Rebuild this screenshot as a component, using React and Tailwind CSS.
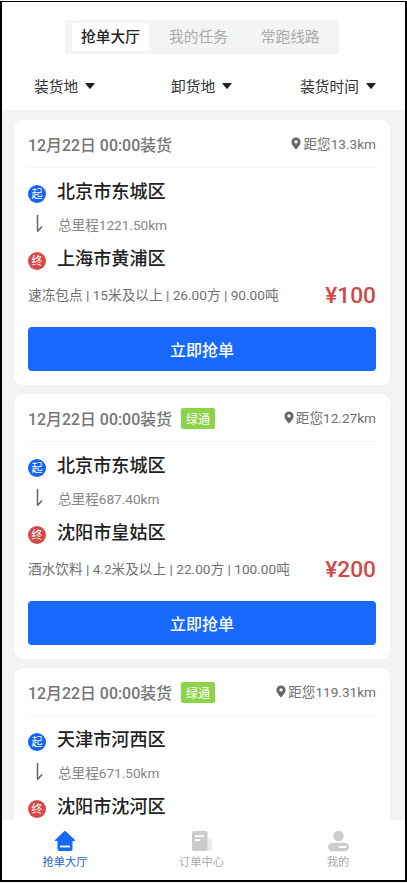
const FONT = "font-[Roboto,'Noto_Sans_CJK_SC',sans-serif]";

const orders = [
  { distance: '13.3km', from: '北京市东城区', to: '上海市黄浦区', mileage: '1221.50km', cargo: '速冻包点 | 15米及以上 | 26.00方 | 90.00吨', price: '¥100', green: false },
  { distance: '12.27km', from: '北京市东城区', to: '沈阳市皇姑区', mileage: '687.40km', cargo: '酒水饮料 | 4.2米及以上 | 22.00方 | 100.00吨', price: '¥200', green: true },
  { distance: '119.31km', from: '天津市河西区', to: '沈阳市沈河区', mileage: '671.50km', green: true },
];

function Filter({ label }) {
  return (
    <button className="flex items-center gap-[7px] text-[14.700px] leading-[22px] text-[#333]">
      {label}
      <svg width="10" height="6" viewBox="0 0 10 6" className="-mt-[3px]">
        <path d="M1 0H9Q10 0 9.500 .8L5.600 5.400Q5 6 4.400 5.400L.5.8Q0 0 1 0Z" fill="#222" />
      </svg>
    </button>
  );
}

function Pin() {
  return (
    <svg width="10" height="13" viewBox="0 0 10 13" className="-mt-px mr-[2px]">
      <path fillRule="evenodd" d="M5 .5A4.600 4.600 0 0 0 .4 5.100C.4 8 3.200 10.700 5 12.500 6.800 10.700 9.600 8 9.600 5.100A4.600 4.600 0 0 0 5 .5ZM5 3.200A1.700 1.700 0 1 1 5 6.600 1.700 1.700 0 0 1 5 3.200Z" fill="#666" />
    </svg>
  );
}

function Stop({ mark, color, name }) {
  return (
    <div className="flex h-[26px] items-center">
      <span className={`mt-[4px] flex size-[18px] items-center justify-center rounded-full pt-px text-[11px] leading-none text-white ${color}`}>{mark}</span>
      <span className="ml-[11px] text-[18.100px] font-medium leading-[26px] text-[#222]">{name}</span>
    </div>
  );
}

function OrderCard({ order }) {
  return (
    <article className="h-[265px] shrink-0 rounded-[9px] bg-white px-[14px]">
      <header className="flex h-[48px] items-center border-b border-[#f4f4f4] text-[#757575]">
        <h2 className="pt-[4px] text-[15.900px] font-medium leading-[24px]">12月22日 00:00装货</h2>
        {order.green && (
          <span className="ml-[9px] mt-[2px] flex h-[21px] w-[34px] items-center justify-center rounded-[2px] bg-[#8bd44a] pt-[2px] text-[12px] text-white">绿通</span>
        )}
        <span className="ml-auto flex items-center text-[13.600px] leading-[20px] text-[#707070]">
          <Pin />距您{order.distance}
        </span>
      </header>
      <div className="pt-[11px]">
        <Stop mark="起" color="bg-[#1463f5]" name={order.from} />
        <div className="flex h-[41px] items-center pb-[2px]">
          <svg width="18" height="20" viewBox="0 0 18 20" fill="none" stroke="#666" strokeWidth="1.500" strokeLinejoin="bevel" className="-mt-[2px]">
            <path d="M9.500 1V17.500L14 12.500" />
          </svg>
          <span className="ml-[12px] text-[13.600px] leading-[20px] text-[#858585]">总里程{order.mileage}</span>
        </div>
        <Stop mark="终" color="bg-[#d64848]" name={order.to} />
      </div>
      {order.cargo && (
        <>
          <div className="mt-[7px] flex h-[33px] items-center justify-between">
            <span className="whitespace-nowrap text-[13.650px] text-[#707070]">{order.cargo}</span>
            <span className="pt-[2px] text-[22.700px] font-medium text-[#cf4a47]">{order.price}</span>
          </div>
          <button className="mt-[15px] flex h-[44px] w-full items-center justify-center rounded-[4px] bg-[#1769ff] pt-[3px] text-[16px] font-medium text-white">立即抢单</button>
        </>
      )}
    </article>
  );
}

function NavItem({ label, color, children }) {
  return (
    <div className={`flex w-[60px] flex-col items-center text-[11.300px] leading-[16px] ${color}`}>
      <svg width="24" height="22" viewBox="0 0 24 22">{children}</svg>
      <span className="mt-[3px]">{label}</span>
    </div>
  );
}

export default function App() {
  return (
    <div className={`h-[883px] w-[407px] bg-white pb-px pt-px ${FONT}`}>
      <div className="flex h-[881px] flex-col overflow-hidden border-x-2 border-b-2 border-t border-black bg-[#f3f3f3]">
        <div className="h-[108px] shrink-0 bg-white">
          <div className="ml-[63px] mt-[18px] flex h-[34px] w-[274px] items-center bg-[#f3f4f4] text-[14.700px] text-[#aaa]">
            <span className="ml-[7px] flex h-[28px] w-[77px] items-center justify-center rounded-[2px] bg-white pt-px font-medium text-[#222]">抢单大厅</span>
            <span className="ml-[20px] pt-px">我的任务</span>
            <span className="ml-[33px] pt-px">常跑线路</span>
          </div>
          <div className="flex pl-[32px] pt-[22px]">
            <Filter label="装货地" />
            <div className="ml-[76px]"><Filter label="卸货地" /></div>
            <div className="ml-[68px]"><Filter label="装货时间" /></div>
          </div>
        </div>
        <main className="flex min-h-0 flex-1 flex-col gap-[9px] overflow-hidden pl-[12px] pr-[15px] pt-[10px]">
          {orders.map((order) => <OrderCard key={order.distance} order={order} />)}
        </main>
        <nav className="flex h-[60px] shrink-0 justify-between bg-white pl-[33px] pr-[37px] pt-[10px]">
          <NavItem label="抢单大厅" color="text-[#2565c7]">
            <path d="M11.200 1.300Q12 .6 12.800 1.300L22 10Q22.500 11 21.500 11H19.500V19Q19.500 21 17.500 21H6.500Q4.500 21 4.500 19V11H2.500Q1.500 11 2 10Z" fill="#1769f5" />
            <path d="M7 16.500H17" stroke="white" strokeWidth="1.800" />
          </NavItem>
          <NavItem label="订单中心" color="text-[#aaa]">
            <path d="M17 9H21Q22 9 22 10V18Q22 21 19 21H15Z" fill="#ececec" />
            <rect x="2" y="1" width="15.500" height="20" rx="2" fill="#ccc" />
            <path d="M5 6.200H14M5 10.200H10" stroke="white" strokeWidth="1.800" />
          </NavItem>
          <NavItem label="我的" color="text-[#aaa]">
            <circle cx="12.500" cy="6" r="5.200" fill="#ccc" />
            <rect x="2" y="12.800" width="21" height="8.500" rx="4.200" fill="#ccc" />
            <path d="M13.500 17H19.500" stroke="white" strokeWidth="1.800" strokeLinecap="round" />
          </NavItem>
        </nav>
      </div>
    </div>
  );
}
